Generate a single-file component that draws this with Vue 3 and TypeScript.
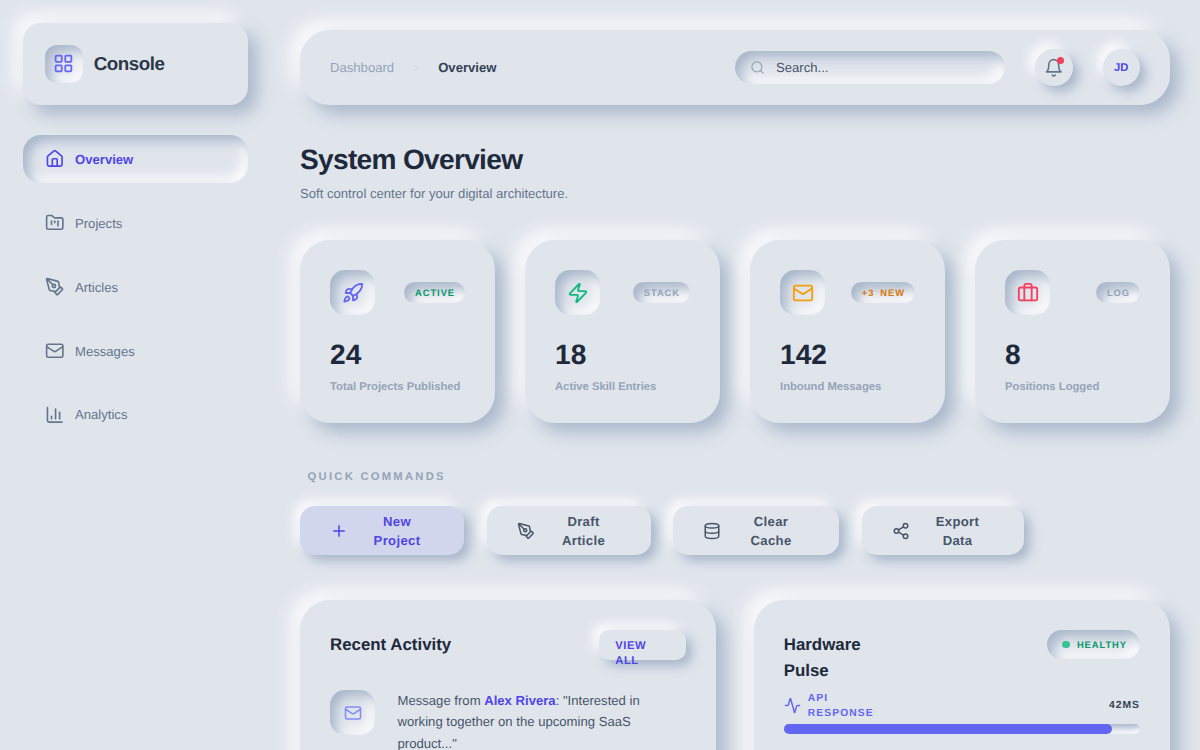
<script setup lang="ts">
const icons: Record<string, string> = {
  grid: '<rect x="3" y="3" width="7" height="7" rx="1"/><rect x="14" y="3" width="7" height="7" rx="1"/><rect x="14" y="14" width="7" height="7" rx="1"/><rect x="3" y="14" width="7" height="7" rx="1"/>',
  house: '<path d="M15 21v-8a1 1 0 0 0-1-1h-4a1 1 0 0 0-1 1v8"/><path d="M3 10a2 2 0 0 1 .709-1.528l7-5.999a2 2 0 0 1 2.582 0l7 5.999A2 2 0 0 1 21 10v9a2 2 0 0 1-2 2H5a2 2 0 0 1-2-2z"/>',
  folder: '<path d="M4 20h16a2 2 0 0 0 2-2V8a2 2 0 0 0-2-2h-7.93a2 2 0 0 1-1.66-.9l-.82-1.2A2 2 0 0 0 7.93 3H4a2 2 0 0 0-2 2v13c0 1.1.9 2 2 2Z"/><path d="M8 10v4"/><path d="M12 10v2"/><path d="M16 10v6"/>',
  pen: '<path d="M15.707 21.293a1 1 0 0 1-1.414 0l-1.586-1.586a1 1 0 0 1 0-1.414l5.586-5.586a1 1 0 0 1 1.414 0l1.586 1.586a1 1 0 0 1 0 1.414z"/><path d="m18 13-1.375-6.874a1 1 0 0 0-.746-.776L3.235 2.028a1 1 0 0 0-1.207 1.207L5.35 15.879a1 1 0 0 0 .776.746L13 18"/><path d="m2.3 2.3 7.286 7.286"/><circle cx="11" cy="11" r="2"/>',
  mail: '<rect x="2" y="4" width="20" height="16" rx="2"/><path d="m22 7-8.97 5.7a1.94 1.94 0 0 1-2.06 0L2 7"/>',
  chart: '<path d="M3 3v16a2 2 0 0 0 2 2h16"/><path d="M18 17V9"/><path d="M13 17V5"/><path d="M8 17v-3"/>',
  search: '<circle cx="11" cy="11" r="8"/><path d="m21 21-4.3-4.3"/>',
  bell: '<path d="M6 8a6 6 0 0 1 12 0c0 7 3 9 3 9H3s3-2 3-9"/><path d="M10.3 21a1.94 1.94 0 0 0 3.4 0"/>',
  rocket: '<path d="M4.5 16.5c-1.5 1.26-2 5-2 5s3.74-.5 5-2c.71-.84.7-2.13-.09-2.91a2.18 2.18 0 0 0-2.91-.09z"/><path d="m12 15-3-3a22 22 0 0 1 2-3.95A12.88 12.88 0 0 1 22 2c0 2.72-.78 7.5-6 11a22.35 22.35 0 0 1-4 2z"/><path d="M9 12H4s.55-3.03 2-4c1.62-1.08 5 0 5 0"/><path d="M12 15v5s3.03-.55 4-2c1.08-1.62 0-5 0-5"/>',
  zap: '<path d="M4 14a1 1 0 0 1-.78-1.63l9.9-10.2a.5.5 0 0 1 .86.46l-1.92 6.02A1 1 0 0 0 13 10h7a1 1 0 0 1 .78 1.63l-9.9 10.2a.5.5 0 0 1-.86-.46l1.92-6.02A1 1 0 0 0 11 14z"/>',
  briefcase: '<path d="M16 20V4a2 2 0 0 0-2-2h-4a2 2 0 0 0-2 2v16"/><rect x="2" y="6" width="20" height="14" rx="2"/>',
  plus: '<path d="M5 12h14"/><path d="M12 5v14"/>',
  database: '<ellipse cx="12" cy="5" rx="9" ry="3"/><path d="M3 5V19A9 3 0 0 0 21 19V5"/><path d="M3 12A9 3 0 0 0 21 12"/>',
  share: '<circle cx="18" cy="5" r="3"/><circle cx="6" cy="12" r="3"/><circle cx="18" cy="19" r="3"/><line x1="8.59" y1="13.51" x2="15.42" y2="17.49"/><line x1="15.41" y1="6.51" x2="8.59" y2="10.49"/>',
  activity: '<path d="M22 12h-2.48a2 2 0 0 0-1.93 1.46l-2.35 8.36a.25.25 0 0 1-.48 0L9.24 2.18a.25.25 0 0 0-.48 0l-2.35 8.36A2 2 0 0 1 4.49 12H2"/>',
  chevron: '<path d="m9 18 6-6-6-6"/>'
}

const navItems = [
  { name: 'Overview', icon: 'house', active: true },
  { name: 'Projects', icon: 'folder', active: false },
  { name: 'Articles', icon: 'pen', active: false },
  { name: 'Messages', icon: 'mail', active: false },
  { name: 'Analytics', icon: 'chart', active: false }
]

const stats = [
  { value: '24', label: 'Total Projects Published', badge: 'Active', icon: 'rocket', tone: 'indigo', badgeTone: 'green' },
  { value: '18', label: 'Active Skill Entries', badge: 'Stack', icon: 'zap', tone: 'emerald', badgeTone: 'muted' },
  { value: '142', label: 'Inbound Messages', badge: '+3 New', icon: 'mail', tone: 'amber', badgeTone: 'orange' },
  { value: '8', label: 'Positions Logged', badge: 'Log', icon: 'briefcase', tone: 'rose', badgeTone: 'muted' }
]

const commands = [
  { name: 'New Project', icon: 'plus', cls: 'cmd-new' },
  { name: 'Draft Article', icon: 'pen', cls: 'cmd-draft' },
  { name: 'Clear Cache', icon: 'database', cls: 'cmd-clear' },
  { name: 'Export Data', icon: 'share', cls: 'cmd-export' }
]
</script>

<template>
  <div class="page">
    <aside class="sidebar">
      <div class="logo">
        <div class="logo-icon">
          <svg class="icon i21" viewBox="0 0 24 24" v-html="icons.grid"></svg>
        </div>
        <span class="logo-text">Console</span>
      </div>
      <nav class="nav">
        <a v-for="item in navItems" :key="item.name" class="nav-item" :class="{ active: item.active }">
          <svg class="icon i20" viewBox="0 0 24 24" v-html="icons[item.icon]"></svg>
          <span>{{ item.name }}</span>
        </a>
      </nav>
    </aside>

    <main class="main">
      <header class="topbar">
        <div class="crumbs">
          <span class="crumb-root">Dashboard</span>
          <svg class="icon crumb-sep" viewBox="0 0 24 24" v-html="icons.chevron"></svg>
          <span class="crumb-current">Overview</span>
        </div>
        <div class="top-right">
          <div class="search">
            <svg class="icon search-icon" viewBox="0 0 24 24" v-html="icons.search"></svg>
            <span>Search...</span>
          </div>
          <div class="round bell">
            <svg class="icon i20" viewBox="0 0 24 24" v-html="icons.bell"></svg>
            <i class="dot"></i>
          </div>
          <div class="round avatar">JD</div>
        </div>
      </header>

      <h1 class="title">System Overview</h1>
      <p class="subtitle">Soft control center for your digital architecture.</p>

      <section class="stats">
        <div v-for="s in stats" :key="s.label" class="stat">
          <div class="stat-top">
            <div class="well" :class="s.tone">
              <svg class="icon i22" viewBox="0 0 24 24" v-html="icons[s.icon]"></svg>
            </div>
            <span class="badge" :class="s.badgeTone">{{ s.badge }}</span>
          </div>
          <div class="stat-value">{{ s.value }}</div>
          <div class="stat-label">{{ s.label }}</div>
        </div>
      </section>

      <h2 class="section-label">Quick Commands</h2>
      <section class="commands">
        <button v-for="c in commands" :key="c.name" class="cmd" :class="c.cls">
          <svg class="icon i18" viewBox="0 0 24 24" v-html="icons[c.icon]"></svg>
          <span>{{ c.name }}</span>
        </button>
      </section>

      <section class="panels">
        <div class="panel">
          <div class="panel-head">
            <h3>Recent Activity</h3>
            <a class="view-all">View All</a>
          </div>
          <div class="activity">
            <div class="well lavender">
              <svg class="icon i18" viewBox="0 0 24 24" v-html="icons.mail"></svg>
            </div>
            <p>Message from <b>Alex Rivera</b>: "Interested in working together on the upcoming SaaS product..."</p>
          </div>
        </div>
        <div class="panel">
          <div class="panel-head">
            <h3 class="pulse-title">Hardware Pulse</h3>
            <span class="healthy"><i></i>Healthy</span>
          </div>
          <div class="metric">
            <div class="metric-name">
              <svg class="icon i16" viewBox="0 0 24 24" v-html="icons.activity"></svg>
              <span>API Response</span>
            </div>
            <span class="metric-value">42ms</span>
          </div>
          <div class="track"><div class="fill" :style="{ width: '92%' }"></div></div>
        </div>
      </section>
    </main>
  </div>
</template>

<style>
html, body {
  margin: 0;
  background: #e0e5ec;
}
</style>

<style scoped>
.page {
  display: flex;
  height: 750px;
  overflow: hidden;
  background: #e0e5ec;
  font-family: "Liberation Sans", Arial, sans-serif;
  text-rendering: geometricPrecision;
  color: #1e293b;
  --out: 9px 9px 17px rgba(163, 177, 198, 0.9), -9px -9px 17px rgba(255, 255, 255, 0.85);
  --out-sm: 6px 6px 11px rgba(163, 177, 198, 0.9), -6px -6px 11px rgba(255, 255, 255, 0.85);
  --in: inset 6px 6px 11px rgba(163, 177, 198, 0.9), inset -6px -6px 11px rgba(255, 255, 255, 0.85);
}

.icon {
  fill: none;
  stroke: currentColor;
  stroke-width: 2;
  stroke-linecap: round;
  stroke-linejoin: round;
  flex-shrink: 0;
  display: block;
}
.i16 { width: 17px; height: 17px; }
.i18 { width: 18px; height: 18px; }
.i20 { width: 19.5px; height: 19.5px; }
.i21 { width: 21px; height: 21px; }
.i22 { width: 22px; height: 22px; }

/* sidebar */
.sidebar {
  width: 270px;
  flex-shrink: 0;
  box-sizing: border-box;
  padding: 22.5px;
}
.logo {
  display: flex;
  align-items: center;
  gap: 11.25px;
  height: 82.5px;
  box-sizing: border-box;
  padding: 0 22.5px;
  border-radius: 18px;
  box-shadow: var(--out);
}
.logo-icon {
  width: 37.5px;
  height: 37.5px;
  border-radius: 12px;
  box-shadow: var(--in);
  display: flex;
  align-items: center;
  justify-content: center;
  color: #6366f1;
}
.logo-text {
  font-size: 18.75px;
  font-weight: 700;
  letter-spacing: -0.47px;
  color: #2d3748;
}
.nav {
  margin-top: 30px;
  display: flex;
  flex-direction: column;
  gap: 16px;
}
.nav-item {
  display: flex;
  align-items: center;
  gap: 10.5px;
  height: 48px;
  padding: 0 22.5px;
  border-radius: 18px;
  font-size: 13.125px;
  color: #64748b;
}
.nav-item:last-child { margin-top: -0.6px; }
.nav-item.active {
  box-shadow: var(--in);
  color: #4f46e5;
  font-weight: 700;
}

/* top bar */
.main {
  flex: 1;
  min-width: 0;
  padding: 30px;
}
.topbar {
  display: flex;
  align-items: center;
  justify-content: space-between;
  height: 75px;
  box-sizing: border-box;
  padding: 0 30px;
  border-radius: 30px;
  box-shadow: var(--out);
}
.crumbs {
  display: flex;
  align-items: center;
  font-size: 13.125px;
}
.crumb-root { color: #94a3b8; }
.crumb-sep {
  width: 12px;
  height: 12px;
  margin: 0 16px;
  color: #cbd5e1;
}
.crumb-current {
  color: #334155;
  font-weight: 700;
}
.top-right {
  display: flex;
  align-items: center;
  gap: 30px;
}
.search {
  display: flex;
  align-items: center;
  gap: 11px;
  width: 270px;
  height: 33px;
  box-sizing: border-box;
  padding: 0 15px;
  border-radius: 17px;
  box-shadow: var(--in);
  font-size: 13.125px;
  color: #475569;
}
.search-icon {
  width: 15px;
  height: 15px;
  color: #94a3b8;
}
.round {
  width: 37.5px;
  height: 37.5px;
  border-radius: 50%;
  box-shadow: var(--out-sm);
  display: flex;
  align-items: center;
  justify-content: center;
  position: relative;
}
.bell { color: #64748b; }
.dot {
  position: absolute;
  top: 8px;
  right: 8.5px;
  width: 7.5px;
  height: 7.5px;
  border-radius: 50%;
  background: #f43f5e;
}
.avatar {
  font-size: 11.25px;
  font-weight: 700;
  color: #4f46e5;
}

/* heading */
.title {
  margin: 37.5px 0 0;
  font-size: 28.125px;
  line-height: 34px;
  font-weight: 700;
  letter-spacing: -0.7px;
  color: #1e293b;
}
.subtitle {
  margin: 7.5px 0 0;
  font-size: 13.125px;
  line-height: 20px;
  color: #64748b;
}

/* stats */
.stats {
  display: grid;
  grid-template-columns: repeat(4, 1fr);
  gap: 30px;
  margin-top: 36px;
}
.stat {
  height: 183px;
  box-sizing: border-box;
  padding: 30px;
  border-radius: 30px;
  box-shadow: var(--out);
}
.stat-top {
  display: flex;
  align-items: center;
  justify-content: space-between;
}
.well {
  width: 45px;
  height: 45px;
  flex-shrink: 0;
  border-radius: 15px;
  box-shadow: var(--in);
  display: flex;
  align-items: center;
  justify-content: center;
}
.indigo { color: #6366f1; }
.emerald { color: #10b981; }
.amber { color: #f59e0b; }
.rose { color: #f43f5e; }
.lavender { color: #818cf8; }
.badge {
  height: 21px;
  line-height: 22px;
  padding: 0 10px 0 11px;
  border-radius: 11px;
  box-shadow: var(--in);
  font-size: 9.375px;
  font-weight: 700;
  letter-spacing: 0.94px;
  word-spacing: 2.5px;
  text-transform: uppercase;
}
.green { color: #059669; }
.muted { color: #94a3b8; }
.orange { color: #d97706; }
.stat-value {
  margin-top: 23px;
  font-size: 28.125px;
  line-height: 34px;
  font-weight: 700;
  color: #1e293b;
}
.stat-label {
  margin-top: 6px;
  font-size: 11.25px;
  line-height: 18px;
  font-weight: 700;
  color: #94a3b8;
}

/* quick commands */
.section-label {
  margin: 45px 0 0 7.5px;
  font-size: 11.25px;
  line-height: 18px;
  font-weight: 700;
  letter-spacing: 2.25px;
  text-transform: uppercase;
  color: #94a3b8;
}
.commands {
  display: flex;
  gap: 22.5px;
  margin-top: 20px;
}
.cmd {
  display: flex;
  align-items: center;
  gap: 12px;
  height: 49px;
  box-sizing: border-box;
  padding: 0 30px;
  border: 0;
  border-radius: 15px;
  background: #e0e5ec;
  box-shadow: var(--out-sm);
  font-family: inherit;
  font-size: 13.125px;
  line-height: 19px;
  font-weight: 700;
  letter-spacing: 0.33px;
  color: #475569;
  text-align: center;
  text-rendering: inherit;
}
.cmd span { flex: 1; }
.cmd-new {
  width: 164px;
  background: #d2d6ec;
  color: #4f46e5;
}
.cmd-draft { width: 164px; }
.cmd-clear { width: 166px; }
.cmd-export { width: 162px; }

/* panels */
.panels {
  display: grid;
  grid-template-columns: 1fr 1fr;
  gap: 37.5px;
  margin-top: 45px;
}
.panel {
  height: 300px;
  box-sizing: border-box;
  padding: 30px;
  border-radius: 30px;
  box-shadow: var(--out);
}
.panel-head {
  display: flex;
  align-items: flex-start;
  justify-content: space-between;
}
.panel-head h3 {
  margin: 0;
  font-size: 16.875px;
  line-height: 29px;
  font-weight: 700;
  color: #1e293b;
}
.panel-head .pulse-title {
  width: 110px;
  line-height: 26px;
  margin-top: 1.5px;
}
.view-all {
  width: 87px;
  height: 30px;
  box-sizing: border-box;
  padding: 9px 16px 0;
  border-radius: 10px;
  box-shadow: var(--out-sm);
  font-size: 11.25px;
  line-height: 15px;
  font-weight: 700;
  letter-spacing: 0.56px;
  text-transform: uppercase;
  color: #4f46e5;
}
.activity {
  display: flex;
  gap: 22.5px;
  margin-top: 30px;
}
.activity p {
  margin: 0;
  font-size: 13.125px;
  line-height: 21.3px;
  color: #475569;
}
.activity b { color: #4f46e5; }
.healthy {
  display: flex;
  align-items: center;
  gap: 7px;
  height: 29px;
  box-sizing: border-box;
  padding: 0 13px 0 15px;
  border-radius: 15px;
  box-shadow: var(--in);
  font-size: 9.375px;
  font-weight: 700;
  letter-spacing: 0.94px;
  text-transform: uppercase;
  color: #059669;
}
.healthy i {
  width: 7.5px;
  height: 7.5px;
  border-radius: 50%;
  background: #34c391;
}
.metric {
  display: flex;
  align-items: center;
  justify-content: space-between;
  margin-top: 7px;
}
.metric-name {
  display: flex;
  align-items: center;
  gap: 7px;
  width: 100px;
  font-size: 10.3px;
  line-height: 15px;
  font-weight: 700;
  letter-spacing: 1.1px;
  text-transform: uppercase;
  color: #6366f1;
}
.metric-value {
  font-size: 10.3px;
  font-weight: 700;
  letter-spacing: 1px;
  text-transform: uppercase;
  color: #334155;
}
.track {
  height: 10px;
  margin-top: 3px;
  border-radius: 5px;
  box-shadow: inset 3px 3px 5px rgba(163, 177, 198, 0.9), inset -3px -3px 5px rgba(255, 255, 255, 0.85);
}
.fill {
  height: 100%;
  border-radius: 5px;
  background: #6366f1;
}
</style>
